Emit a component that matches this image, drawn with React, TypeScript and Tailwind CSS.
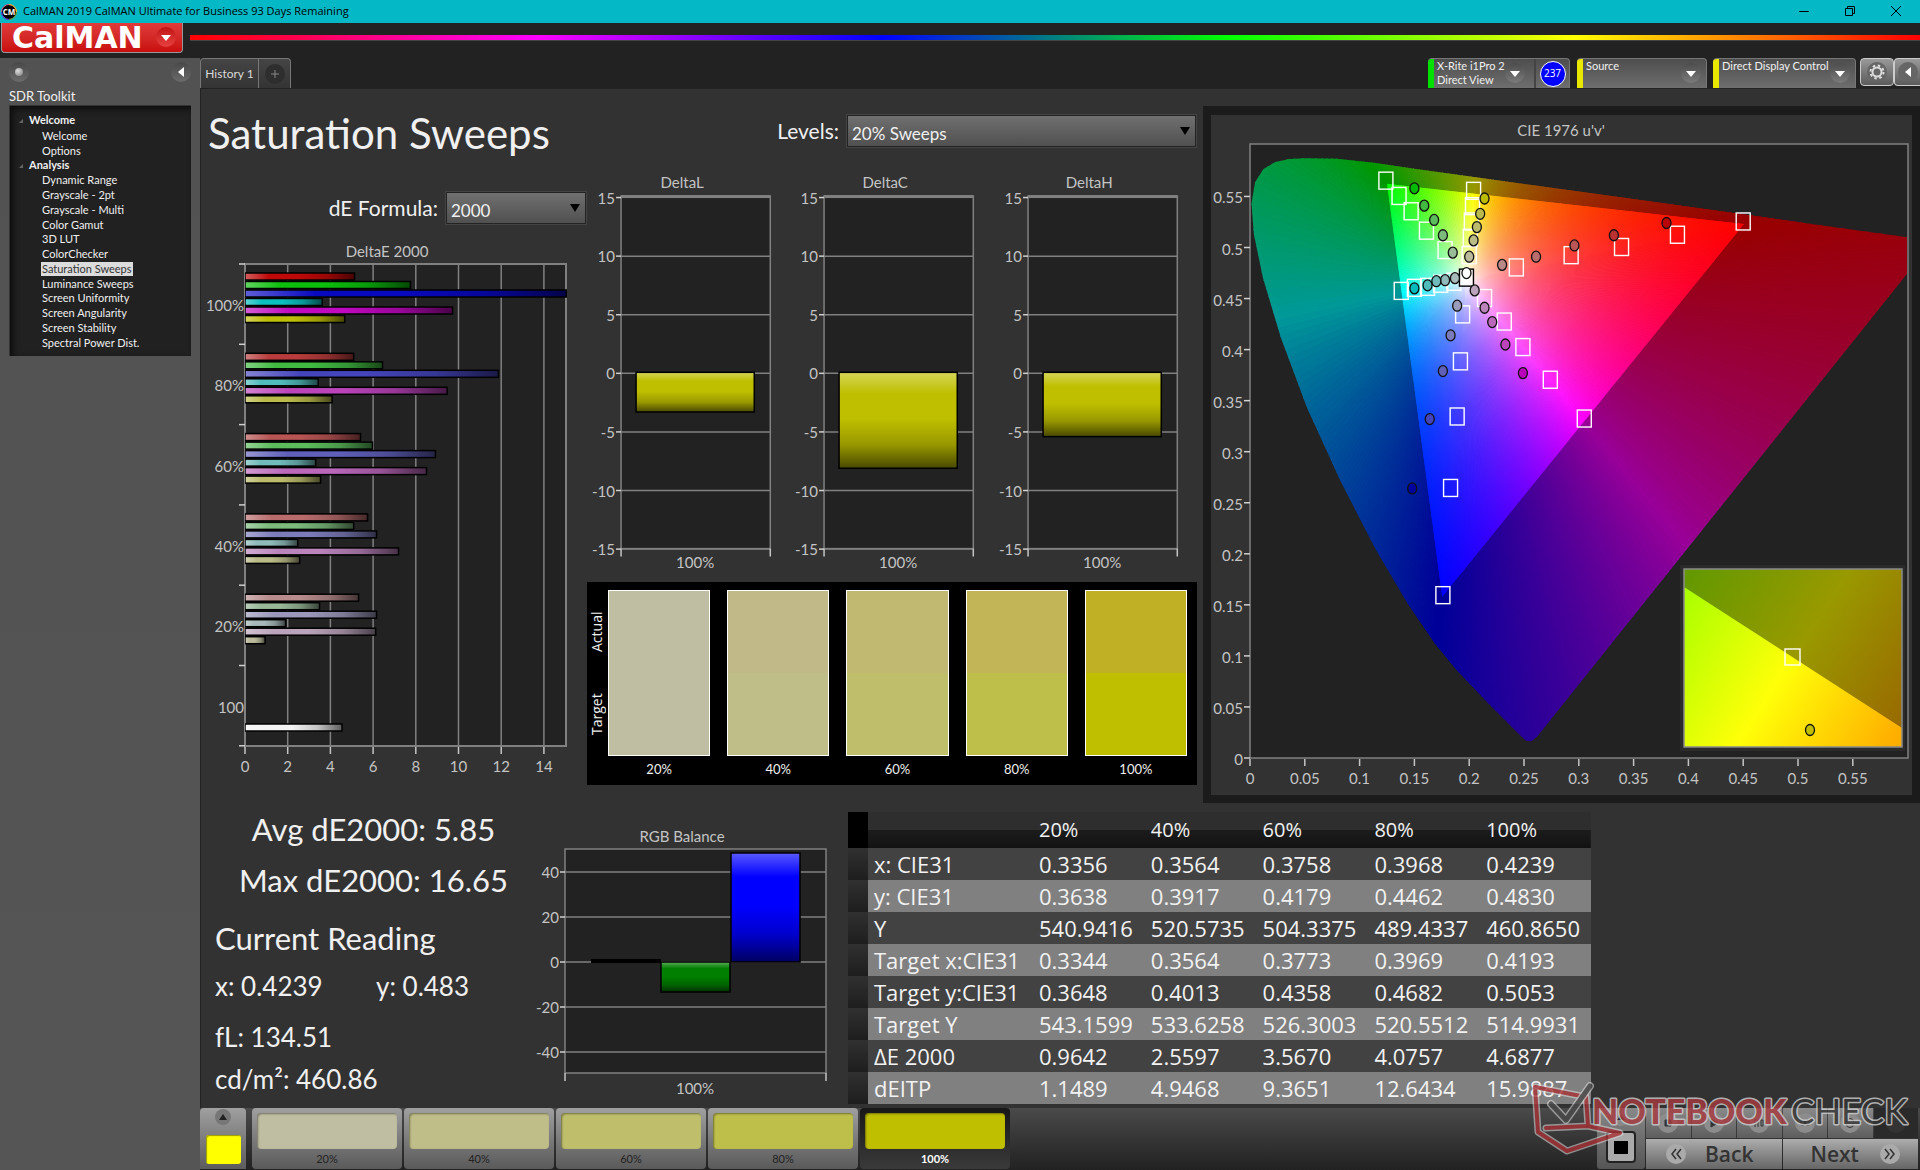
import React from "react";

/* ---------- data ---------- */

const NAV = [
  { title: "Welcome", items: ["Welcome", "Options"] },
  {
    title: "Analysis",
    items: [
      "Dynamic Range",
      "Grayscale - 2pt",
      "Grayscale - Multi",
      "Color Gamut",
      "3D LUT",
      "ColorChecker",
      "Saturation Sweeps",
      "Luminance Sweeps",
      "Screen Uniformity",
      "Screen Angularity",
      "Screen Stability",
      "Spectral Power Dist.",
    ],
  },
];

const DE_GROUPS = [
  { label: "100%", values: [5.13, 7.75, 15.05, 3.62, 9.72, 4.67], colors: ["#bf0808", "#0cbf0c", "#0808bf", "#0cbfbf", "#bf08bf", "#bfbf08"] },
  { label: "80%", values: [5.09, 6.44, 11.87, 3.43, 9.47, 4.08], colors: ["#b83c3c", "#40bb40", "#4444bb", "#50bbbb", "#bb44bb", "#bbbb4c"] },
  { label: "60%", values: [5.41, 5.97, 8.92, 3.31, 8.5, 3.54], colors: ["#b85454", "#5cbb5c", "#6060bb", "#70bbbb", "#bb68bb", "#bbbb6c"] },
  { label: "40%", values: [5.74, 5.09, 6.16, 2.47, 7.19, 2.56], colors: ["#b86c6c", "#7cbb7c", "#7c7cbb", "#90bbbb", "#bb84bb", "#bbbb88"] },
  { label: "20%", values: [5.32, 3.49, 6.16, 1.9, 6.12, 0.94], colors: ["#b88c8c", "#98b898", "#9c98bb", "#a8b8b8", "#bba4bb", "#bbbb9c"] },
];

const SWATCHES = [
  { label: "20%", actual: "#bfbda2", target: "#bfbea3" },
  { label: "40%", actual: "#c1b988", target: "#bfbe88" },
  { label: "60%", actual: "#c1b871", target: "#bebe6b" },
  { label: "80%", actual: "#c2b557", target: "#bebf4a" },
  { label: "100%", actual: "#bfb025", target: "#bfbf00" },
];

const COLUMNS = ["20%", "40%", "60%", "80%", "100%"];
const ROWS = [
  ["x: CIE31", "0.3356", "0.3564", "0.3758", "0.3968", "0.4239"],
  ["y: CIE31", "0.3638", "0.3917", "0.4179", "0.4462", "0.4830"],
  ["Y", "540.9416", "520.5735", "504.3375", "489.4337", "460.8650"],
  ["Target x:CIE31", "0.3344", "0.3564", "0.3773", "0.3969", "0.4193"],
  ["Target y:CIE31", "0.3648", "0.4013", "0.4358", "0.4682", "0.5053"],
  ["Target Y", "543.1599", "533.6258", "526.3003", "520.5512", "514.9931"],
  ["ΔE 2000", "0.9642", "2.5597", "3.5670", "4.0757", "4.6877"],
  ["dEITP", "1.1489", "4.9468", "9.3651", "12.6434", "15.9887"],
];

/* u'v' coordinates in thousandths */
const TARGETS = [
  [243, 480], [293, 492], [339, 500], [390, 512], [450, 525],
  [178, 497], [161, 516], [147, 535], [136, 550], [124, 565],
  [200, 492], [201, 509], [202, 525], [203, 540], [204, 555],
  [186, 466], [174, 464], [162, 461], [150, 460], [138, 457],
  [194, 434], [192, 388], [189, 334], [183, 264], [176, 159],
  [214, 450], [232, 427], [249, 402], [274, 370], [305, 332],
];
const READINGS: [number, number, string][] = [
  [230, 483, "#bb8888"], [261, 491, "#bb6c6c"], [296, 502, "#bb5454"], [332, 512, "#bb3030"], [380, 524, "#bb0000"],
  [185, 495, "#98bb98"], [176, 512, "#7cbb7c"], [168, 527, "#5cbb5c"], [159, 541, "#40bb40"], [150, 558, "#00bb00"],
  [200, 491, "#bbbb9c"], [204, 507, "#bbbb88"], [207, 520, "#bbbb6c"], [210, 533, "#bbbb4c"], [214, 548, "#bbbb00"],
  [187, 470, "#a8bbbb"], [178, 468, "#90bbbb"], [170, 467, "#70bbbb"], [162, 463, "#50bbbb"], [150, 460, "#00bbbb"],
  [189, 443, "#9c9cbb"], [183, 414, "#7c7cbb"], [176, 379, "#6060bb"], [164, 332, "#4444bb"], [148, 264, "#0000a0"],
  [205, 458, "#bba4bb"], [214, 441, "#bb84bb"], [221, 427, "#bb68bb"], [233, 405, "#bb44bb"], [249, 377, "#bb00bb"],
];
const LOCUS = [
  [0.2568, 0.0165], [0.252, 0.0168], [0.2461, 0.0228], [0.2347, 0.035], [0.216, 0.055], [0.1877, 0.0871], [0.169, 0.1119],
  [0.1441, 0.151], [0.1147, 0.2044], [0.0828, 0.2708], [0.0521, 0.3427], [0.0282, 0.4117], [0.0119, 0.4698],
  [0.0035, 0.5131], [0.0014, 0.5432], [0.0046, 0.5639], [0.0123, 0.577], [0.0231, 0.5837], [0.036, 0.5868],
  [0.0501, 0.5874], [0.0792, 0.587], [0.1127, 0.583], [0.1531, 0.5766], [0.2026, 0.5694], [0.2623, 0.5604],
  [0.3315, 0.5501], [0.4035, 0.5393], [0.5203, 0.5219], [0.6234, 0.5065], [0.262, 0.021],
];

/* ---------- gamut colouring ---------- */

type Pt = [number, number];
const PRIM: Pt[] = [[0.4507, 0.5229], [0.125, 0.5625], [0.1754, 0.1579]];
const WEIGHT = [3.66, 11.44, 4.11];
const WHITE: Pt = [0.1978, 0.4683];

function rgbAt([u, v]: Pt, gain: number) {
  const [[x1, y1], [x2, y2], [x3, y3]] = PRIM;
  const d = (y2 - y3) * (x1 - x3) + (x3 - x2) * (y1 - y3);
  const a = ((y2 - y3) * (u - x3) + (x3 - x2) * (v - y3)) / d;
  const b = ((y3 - y1) * (u - x3) + (x1 - x3) * (v - y3)) / d;
  const lin = [a, b, 1 - a - b].map((n, i) => Math.max(0, n) / WEIGHT[i]);
  const top = Math.max(...lin);
  return `rgb(${lin.map((n) => Math.round((n / top) * 255 * gain)).join(",")})`;
}

const PX = (u: number) => 39 + u * 1096;
const PY = (v: number) => 643 - v * 1021;
const mix = (a: Pt, b: Pt, t: number): Pt => [a[0] + (b[0] - a[0]) * t, a[1] + (b[1] - a[1]) * t];
const toPx = ([u, v]: Pt): Pt => [PX(u), PY(v)];
const join = (pts: Pt[]) => pts.map((p) => `${p[0].toFixed(2)},${p[1].toFixed(2)}`).join(" ");

const STEPS = 150;
const STOPS = [0, 0.08, 0.18, 0.3, 0.45, 0.65, 0.82, 1];
const WEDGES = [0, 1, 2].flatMap((edge) =>
  Array.from({ length: STEPS }, (_, i) => {
    const from = PRIM[edge];
    const to = PRIM[(edge + 1) % 3];
    const a = mix(from, to, i / STEPS);
    const b = mix(from, to, (i + 1) / STEPS);
    const mid = mix(a, b, 0.5);
    const [ax, ay] = toPx(from);
    const [bx, by] = toPx(to);
    const [wx, wy] = toPx(WHITE);
    const t = ((wx - ax) * (bx - ax) + (wy - ay) * (by - ay)) / ((bx - ax) ** 2 + (by - ay) ** 2);
    return {
      id: `ray-${edge}-${i}`,
      foot: [ax + (bx - ax) * t, ay + (by - ay) * t] as Pt,
      inner: join([WHITE, a, b].map((p) => toPx(p as Pt))),
      outer: join([toPx(WHITE), toPx(mix(WHITE, a, 8)), toPx(mix(WHITE, b, 8))]),
      dim: rgbAt(mid, 0.6),
      stops: STOPS.map((s) => ({ s, c: rgbAt(mix(WHITE, mid, s), 1) })),
    };
  }),
);

/* ---------- shared chart parts ---------- */

const GRID = "#808080";
const LABEL = "fill-[#c4c4c4] text-[15px]";

function Shading({ id, vertical }: { id: string; vertical?: boolean }) {
  return (
    <linearGradient id={id} x1="0" y1="0" x2={vertical ? "0" : "1"} y2={vertical ? "1" : "0"}>
      <stop offset="0" stopColor="#fff" stopOpacity="0.35" />
      <stop offset="0.22" stopColor="#fff" stopOpacity="0" />
      <stop offset="0.48" stopColor="#000" stopOpacity="0" />
      <stop offset="0.75" stopColor="#000" stopOpacity="0.2" />
      <stop offset="1" stopColor="#000" stopOpacity="0.62" />
    </linearGradient>
  );
}

function Bar({ x, y, w, h, color, shade }: { x: number; y: number; w: number; h: number; color: string; shade: string }) {
  return (
    <g>
      <rect x={x} y={y} width={w} height={h} fill={color} />
      <rect x={x} y={y} width={w} height={h} fill={`url(#${shade})`} stroke="#000" strokeWidth="1.5" />
    </g>
  );
}

function DeltaEChart() {
  const x0 = 45;
  const unit = 21.35;
  const top = 24;
  const step = 80.3;
  return (
    <svg viewBox="0 0 387 545" className="block w-full overflow-visible" role="img" aria-label="DeltaE 2000">
      <defs>
        <Shading id="shade-h" />
        <clipPath id="de-plot">
          <rect x={x0} y={top} width="322" height="482" />
        </clipPath>
      </defs>
      <text x="187" y="17" textAnchor="middle" className={LABEL}>DeltaE 2000</text>
      <rect x={x0} y={top} width="321" height="482" fill="#222" stroke={GRID} strokeWidth="2" />
      {[2, 4, 6, 8, 10, 12, 14].map((n) => (
        <line key={n} x1={x0 + n * unit} x2={x0 + n * unit} y1={top} y2="506" stroke={GRID} strokeWidth="1.5" />
      ))}
      {[0, 2, 4, 6, 8, 10, 12, 14].map((n) => (
        <g key={n}>
          <line x1={x0 + n * unit} x2={x0 + n * unit} y1="507" y2="514" stroke="#c4c4c4" strokeWidth="1.5" />
          <text x={x0 + n * unit} y="532" textAnchor="middle" className={LABEL}>{n}</text>
        </g>
      ))}
      {[0, 1, 2, 3, 4, 5, 6].map((n) => (
        <line key={n} x1="39" x2={x0} y1={top + n * step} y2={top + n * step} stroke="#d0d0d0" strokeWidth="1.5" />
      ))}
      <g clipPath="url(#de-plot)">
        {DE_GROUPS.map((g, gi) =>
          g.values.map((v, i) => (
            <Bar key={`${gi}-${i}`} x={x0} y={33 + gi * step + i * 8.5} w={v * unit} h={7} color={g.colors[i]} shade="shade-h" />
          )),
        )}
        <Bar x={x0} y={484} w={97} h={7} color="#f4f4f4" shade="shade-h" />
      </g>
      {[...DE_GROUPS.map((g) => g.label), "100"].map((l, i) => (
        <text key={i} x="44" y={71 + i * step} textAnchor="end" className={LABEL}>{l}</text>
      ))}
    </svg>
  );
}

function DeltaChart({ name, value }: { name: string; value: number }) {
  const y = (n: number) => 374 - 170 - n * 11.7;
  return (
    <svg viewBox="0 0 203 412" className="block w-full overflow-visible" role="img" aria-label={name}>
      <defs>
        <Shading id={`shade-${name}`} vertical />
      </defs>
      <text x="95" y="19" textAnchor="middle" className={LABEL}>{name}</text>
      <rect x="34" y="27" width="149" height="352" fill="#222" stroke={GRID} strokeWidth="1.5" />
      <rect x="34" y="26" width="149" height="3" fill={GRID} />
      {[15, 10, 5, 0, -5, -10, -15].map((n) => (
        <g key={n}>
          {n < 15 && <line x1="34" x2="183" y1={y(n)} y2={y(n)} stroke={GRID} strokeWidth="1.5" />}
          <line x1="29" x2="34" y1={y(n)} y2={y(n)} stroke="#d0d0d0" strokeWidth="1.5" />
          <text x="28" y={y(n) + 6} textAnchor="end" className={LABEL}>{n}</text>
        </g>
      ))}
      <path d="M34 379v8M183 379v8" stroke="#c4c4c4" strokeWidth="1.5" />
      <Bar x={49} y={y(0) - 1} w={118} h={-value * 11.7 + 1} color="#bfbf00" shade={`shade-${name}`} />
      <text x="108" y="398" textAnchor="middle" className={LABEL}>100%</text>
    </svg>
  );
}

function RgbBalance() {
  return (
    <svg viewBox="0 0 296 285" className="block w-full overflow-visible" role="img" aria-label="RGB Balance">
      <defs>
        <Shading id="shade-rgb" vertical />
      </defs>
      <text x="142" y="24" textAnchor="middle" className={LABEL}>RGB Balance</text>
      <rect x="25" y="31" width="261" height="224" fill="#222" stroke={GRID} strokeWidth="1.5" />
      {[40, 20, 0, -20, -40].map((n) => (
        <g key={n}>
          <line x1="25" x2="286" y1={144 - n * 2.25} y2={144 - n * 2.25} stroke={GRID} strokeWidth="1.5" />
          <line x1="20" x2="25" y1={144 - n * 2.25} y2={144 - n * 2.25} stroke="#d0d0d0" strokeWidth="1.5" />
          <text x="19" y={150 - n * 2.25} textAnchor="end" className={LABEL}>{n}</text>
        </g>
      ))}
      <path d="M25 255v8M286 255v8" stroke="#c4c4c4" strokeWidth="1.5" />
      <rect x="51" y="141" width="70" height="4" fill="#000" />
      <Bar x={121} y={144} w={69} h={30} color="#007f00" shade="shade-rgb" />
      <Bar x={191} y={35} w={69} h={109} color="#0000ff" shade="shade-rgb" />
      <text x="155" y="276" textAnchor="middle" className={LABEL}>100%</text>
    </svg>
  );
}

function CieChart() {
  const ticks = Array.from({ length: 12 }, (_, i) => i * 50);
  return (
    <svg viewBox="0 0 701 680" className="block w-full overflow-visible" role="img" aria-label="CIE 1976 u'v'">
      <defs>
        <clipPath id="cie-plot"><rect x="39" y="30" width="657" height="613" /></clipPath>
        <clipPath id="cie-locus"><polygon points={join(LOCUS.map((p) => toPx(p as Pt)))} /></clipPath>
        <clipPath id="cie-gamut"><polygon points={join(PRIM.map(toPx))} /></clipPath>
        {WEDGES.map((w) => (
          <linearGradient key={w.id} id={w.id} gradientUnits="userSpaceOnUse" x1={PX(WHITE[0])} y1={PY(WHITE[1])} x2={w.foot[0]} y2={w.foot[1]}>
            {w.stops.map((s) => <stop key={s.s} offset={s.s} stopColor={s.c} />)}
          </linearGradient>
        ))}
        <linearGradient id="inset-dim" gradientUnits="userSpaceOnUse" x1="473" y1="473" x2="691" y2="613">
          <stop offset="0" stopColor="#659900" />
          <stop offset="0.5" stopColor="#999900" />
          <stop offset="1" stopColor="#996900" />
        </linearGradient>
        <linearGradient id="inset-lit" gradientUnits="userSpaceOnUse" x1="473" y1="473" x2="691" y2="613">
          <stop offset="0" stopColor="#a8ff00" />
          <stop offset="0.5" stopColor="#ffff08" />
          <stop offset="1" stopColor="#ffae00" />
        </linearGradient>
      </defs>
      <text x="350" y="21" textAnchor="middle" className={LABEL}>CIE 1976 u'v'</text>
      <rect x="39" y="29" width="658" height="614" fill="#222" stroke={GRID} strokeWidth="1.5" />
      <g clipPath="url(#cie-plot)">
        <g clipPath="url(#cie-locus)">
          {WEDGES.map((w) => <polygon key={w.id} points={w.outer} fill={w.dim} stroke={w.dim} strokeWidth="1" />)}
        </g>
        <g clipPath="url(#cie-gamut)">
          {WEDGES.map((w) => <polygon key={w.id} points={w.inner} fill={`url(#${w.id})`} stroke={`url(#${w.id})`} strokeWidth="0.7" />)}
        </g>
      </g>
      {ticks.map((t) => (
        <g key={t}>
          <path d={`M${PX(t / 1000)} 644v7`} stroke="#c4c4c4" strokeWidth="1.5" />
          <text x={PX(t / 1000)} y="669" textAnchor="middle" className={LABEL}>{t / 1000}</text>
          <path d={`M33 ${PY(t / 1000)}h6`} stroke="#d0d0d0" strokeWidth="1.5" />
          <text x="32" y={PY(t / 1000) + 7} textAnchor="end" className={LABEL}>{t / 1000}</text>
        </g>
      ))}
      {TARGETS.map(([u, v], i) => (
        <rect key={i} x={PX(u / 1000) - 7} y={PY(v / 1000) - 9} width="14" height="17" fill="none" stroke="#fff" strokeWidth="1.4" />
      ))}
      <rect x={PX(0.1975) - 7} y={PY(0.47) - 9} width="14" height="17" fill="#fff" fillOpacity="0.7" stroke="#000" strokeWidth="1.4" />
      {READINGS.map(([u, v, c], i) => (
        <ellipse key={i} cx={PX(u / 1000)} cy={PY(v / 1000)} rx="4.5" ry="5.5" fill={c} stroke="#111" strokeWidth="1.3" />
      ))}
      <ellipse cx={PX(0.1975)} cy={PY(0.475)} rx="4.5" ry="5.5" fill="#fff" stroke="#111" strokeWidth="1.3" />
      <rect x="469" y="450" width="225" height="186" fill="#2b2b2b" />
      <rect x="473" y="454" width="218" height="178" fill="url(#inset-dim)" />
      <polygon points="473,472 691,613 691,632 473,632" fill="url(#inset-lit)" />
      <rect x="473" y="454" width="218" height="178" fill="none" stroke="#8a8a8a" strokeWidth="1.5" />
      <rect x="574" y="534" width="15" height="16" fill="none" stroke="#fff" strokeWidth="1.4" />
      <ellipse cx="599" cy="615" rx="4.5" ry="5.5" fill="#bfbf00" stroke="#111" strokeWidth="1.3" />
    </svg>
  );
}

/* ---------- controls ---------- */

function DownDot() {
  return (
    <span className="flex h-5 w-5 items-center justify-center rounded-full bg-gradient-to-b from-[#4c4c4c] to-[#7c7c7c]">
      <svg viewBox="0 0 10 6" className="mt-[2px] h-[6px] w-[10px]"><path d="M0 0h10L5 6z" fill="#fff" /></svg>
    </span>
  );
}

function Choice({ id, value, options, className }: { id: string; value: string; options: string[]; className: string }) {
  return (
    <span className={`relative block h-8 shrink-0 ${className}`}>
      <select
        id={id}
        defaultValue={value}
        className="h-full w-full appearance-none border border-[#232323] bg-gradient-to-b from-[#707070] to-[#505050] pt-[6px] pl-1 text-[17px] leading-6 text-[#f0f0f0] outline-1 outline-[#444]"
      >
        {options.map((o) => <option key={o}>{o}</option>)}
      </select>
      <svg viewBox="0 0 10 8" className="pointer-events-none absolute top-3 right-[6px] h-2 w-[10px]"><path d="M0 0h10L5 8z" fill="#000" /></svg>
    </span>
  );
}

function Device({ lines, bar, className, count }: { lines: string[]; bar: string; className: string; count?: string }) {
  return (
    <div className={`flex h-[30px] overflow-hidden rounded-t-[4px] border-t border-r border-[#777] bg-gradient-to-b from-[#4e4e4e] to-[#6e6e6e] ${className}`}>
      <span className={`w-[6px] shrink-0 ${bar}`} />
      <button className={`flex min-w-0 flex-1 items-start justify-between pl-[3px] text-left text-[11px] leading-[14px] text-[#f0f0f0] ${count ? "pr-[10px]" : "pr-[5px]"}`}>
        <span className="whitespace-nowrap">{lines.map((l) => <span key={l} className="block">{l}</span>)}</span>
        <span className="mt-1 shrink-0"><DownDot /></span>
      </button>
      {count && (
        <span className="flex w-[35px] shrink-0 items-center justify-center border-l-2 border-[#444]">
          <span className="flex h-[26px] w-[26px] items-center justify-center rounded-full border border-white bg-[#0000ff] font-['Open_Sans',sans-serif] text-[10px] text-white">{count}</span>
        </span>
      )}
    </div>
  );
}

function Header() {
  return (
    <header>
      <div className="flex h-[23px] items-center bg-[#04b8c6] pr-[18px] pl-px font-['Open_Sans',sans-serif] text-[11px] text-black">
        <svg viewBox="0 0 16 16" className="h-4 w-4">
          <circle cx="8" cy="8" r="7.5" fill="#000" stroke="#d58" strokeWidth="1" />
          <path d="M8 .5A7.500 7.500 0 0 1 15.500 8" fill="none" stroke="#e8d020" />
          <path d="M15.500 8A7.500 7.500 0 0 1 8 15.500" fill="none" stroke="#30c040" />
          <path d="M8 15.500A7.500 7.500 0 0 1 .5 8" fill="none" stroke="#3040e0" />
          <text x="8" y="11" textAnchor="middle" className="fill-white text-[8px] font-bold">CM</text>
        </svg>
        <span className="ml-[6px] flex-1">CalMAN 2019 CalMAN Ultimate for Business 93 Days Remaining</span>
        <div className="-mt-[2px] flex gap-[34px]">
          <button aria-label="Minimize"><svg viewBox="0 0 12 12" className="h-3 w-3"><path d="M1 6.500h10" stroke="#000" /></svg></button>
          <button aria-label="Restore"><svg viewBox="0 0 12 12" className="h-3 w-3" fill="none" stroke="#000"><path d="M1.500 3.500h7v7h-7zM3.500 3.500v-2h7v7h-2" /></svg></button>
          <button aria-label="Close"><svg viewBox="0 0 12 12" className="h-3 w-3"><path d="M1 1l10 10M11 1L1 11" stroke="#000" /></svg></button>
        </div>
      </div>
      <div className="flex h-[35px] items-start bg-[#222]">
        <button className="ml-px flex h-[30px] w-[182px] items-center justify-between rounded-b-[4px] border border-t-0 border-[#999] bg-gradient-to-b from-[#e03a3a] to-[#c80c0c] pr-[6px] pl-[10px] font-['DejaVu_Sans',sans-serif] text-[30px] leading-[30px] font-bold text-white">
          <span className="h-[30px]">CalMAN</span>
          <span className="-mt-px flex h-5 w-5 items-center justify-center rounded-full bg-gradient-to-b from-[#c01010] to-[#e84040]">
            <svg viewBox="0 0 10 6" className="mt-[2px] h-[6px] w-[10px]"><path d="M0 0h10L5 6z" fill="#fff" /></svg>
          </span>
        </button>
        <div className="mt-3 ml-[7px] h-[6px] flex-1 border-b border-[#444] bg-[linear-gradient(to_right,#f00,#f0f_20%,#00f_40%,#0f0_60%,#ff0_80%,#f00)]" />
      </div>
    </header>
  );
}

function Sidebar() {
  return (
    <nav className="w-[200px] shrink-0 bg-gradient-to-b from-[#525252] to-[#555] pr-[9px] pl-[9px] text-[#f0f0f0]">
      <div className="flex h-7 items-center justify-between">
        <span className="flex h-5 w-5 items-center justify-center rounded-full bg-gradient-to-b from-[#484848] to-[#6c6c6c]">
          <span className="h-2 w-2 rounded-full bg-[radial-gradient(circle_at_35%_35%,#ddd,#777)]" />
        </span>
        <button aria-label="Collapse" className="flex h-5 w-5 items-center justify-center rounded-full bg-gradient-to-b from-[#484848] to-[#6c6c6c]">
          <svg viewBox="0 0 6 10" className="h-[10px] w-[6px]"><path d="M6 0v10L0 5z" fill="#fff" /></svg>
        </button>
      </div>
      <div className="h-[19px] text-[13px] leading-5">SDR Toolkit</div>
      <div className="flex h-[251px] flex-col border-t border-l border-[#333] bg-[#212121] pt-[7px] pl-[9px] text-[11px] shadow-[inset_3px_3px_6px_#0d0d0d]">
        {NAV.map((g) => (
          <section key={g.title} className="flex flex-col">
            <h2 className="flex h-[15px] items-center gap-[6px] font-bold">
              <svg viewBox="0 0 4 4" className="h-1 w-1"><path d="M4 0v4H0z" fill="#666" /></svg>
              {g.title}
            </h2>
            <ul className={`grid auto-rows-fr pl-[23px] ${g.items.length > 2 ? "h-[177px]" : "h-[30px]"}`}>
              {g.items.map((it) => (
                <li key={it} className="flex items-center">
                  <a href="#" className={it === "Saturation Sweeps" ? "-ml-px bg-[#dcdcdc] px-px leading-[14px] text-[#333]" : "leading-[14px]"}>{it}</a>
                </li>
              ))}
            </ul>
          </section>
        ))}
      </div>
    </nav>
  );
}

function TopBar() {
  return (
    <div className="flex h-[31px] items-start bg-[#222]">
      <div className="flex h-[30px] rounded-t-[4px] border border-b-0 border-[#777] bg-gradient-to-b from-[#454545] to-[#343434] text-[#d8d8d8]">
        <button className="w-[58px] border-r border-[#777] text-[12px] whitespace-nowrap">History 1</button>
        <button aria-label="Add history" className="flex w-[31px] items-center justify-center">
          <span className="flex h-5 w-5 items-center justify-center rounded-full bg-[#2e2e2e]">
            <svg viewBox="0 0 8 8" className="h-2 w-2"><path d="M4 0v8M0 4h8" stroke="#888" /></svg>
          </span>
        </button>
      </div>
      <div className="ml-auto flex items-start">
        <Device lines={["X-Rite i1Pro 2", "Direct View"]} bar="bg-[#00e000]" className="w-[142px]" count="237" />
        <Device lines={["Source"]} bar="bg-[#e8e800]" className="ml-[7px] w-[130px]" />
        <Device lines={["Direct Display Control"]} bar="bg-[#e8e800]" className="ml-[6px] w-[143px]" />
        <button aria-label="Settings" className="ml-1 flex h-7 w-[34px] items-center justify-center rounded-[4px] border border-[#ccc] bg-gradient-to-b from-[#999] to-[#5c5c5c]">
          <svg viewBox="0 0 20 20" className="h-5 w-5">
            <circle cx="10" cy="10" r="10" fill="#666" />
            <circle cx="10" cy="10" r="4.500" fill="none" stroke="#ddd" strokeWidth="2" />
            <circle cx="10" cy="10" r="6.500" fill="none" stroke="#ddd" strokeWidth="2" strokeDasharray="2.500 2.600" />
          </svg>
        </button>
        <button aria-label="Show panel" className="flex h-7 w-[26px] items-center justify-center rounded-l-[4px] border border-r-0 border-[#ccc] bg-gradient-to-b from-[#999] to-[#5c5c5c]">
          <span className="flex h-5 w-5 items-center justify-center rounded-full bg-[#666]">
            <svg viewBox="0 0 6 10" className="h-[10px] w-[6px]"><path d="M6 0v10L0 5z" fill="#fff" /></svg>
          </span>
        </button>
      </div>
    </div>
  );
}

function Comparison() {
  return (
    <div className="flex h-[203px] bg-black pt-2 pr-[10px] text-[#f0f0f0]">
      <div className="flex h-[166px] w-[21px] flex-col-reverse font-['Open_Sans',sans-serif] text-[14px]">
        <span className="flex-1 rotate-180 text-center leading-5 [writing-mode:vertical-rl]">Target</span>
        <span className="flex-1 rotate-180 text-center leading-5 [writing-mode:vertical-rl]">Actual</span>
      </div>
      <div className="grid flex-1 grid-cols-5 gap-[17px]">
        {SWATCHES.map((s) => (
          <figure key={s.label}>
            <div className="h-[166px] border border-white">
              <div className="h-1/2" style={{ background: s.actual }} />
              <div className="h-1/2" style={{ background: s.target }} />
            </div>
            <figcaption className="text-center text-[13px] leading-[26px]">{s.label}</figcaption>
          </figure>
        ))}
      </div>
    </div>
  );
}

function DataTable() {
  return (
    <table className="w-full table-fixed border-collapse text-left font-['Open_Sans',sans-serif] text-[22px] text-[#f2f2f2]">
      <colgroup>
        <col className="w-5" />
        <col className="w-[164px]" />
        <col /><col /><col /><col /><col />
      </colgroup>
      <thead>
        <tr className="h-9 bg-[linear-gradient(to_bottom,#2e2e2e_50%,#1c1c1c_50%,#121212)] text-[20px]">
          <td className="bg-black p-0" />
          <td className="p-0" />
          {COLUMNS.map((c) => <th key={c} scope="col" className="p-0 pl-[7px] leading-9 font-normal">{c}</th>)}
        </tr>
      </thead>
      <tbody>
        {ROWS.map((r, i) => (
          <tr key={r[0]} className={i % 2 ? "h-8 bg-[#808080]" : "h-8 bg-[#424242]"}>
            <td className="bg-gradient-to-b from-[#303030] to-[#1e1e1e] p-0" />
            <th scope="row" className="p-0 pl-[6px] leading-8 font-normal whitespace-nowrap">{r[0]}</th>
            {r.slice(1).map((c, j) => <td key={j} className="p-0 pl-[7px] leading-8">{c}</td>)}
          </tr>
        ))}
      </tbody>
    </table>
  );
}

function Watermark() {
  return (
    <svg viewBox="0 0 380 76" className="pointer-events-none absolute right-2 bottom-3 h-[76px] w-[380px] opacity-80" role="img" aria-label="NotebookCheck">
      <g fill="none" strokeLinejoin="round" strokeLinecap="round">
        <path d="M3 5L54 15L56 44L14 46M3 5L6 50L35 69L88 51L56 44" stroke="#ddd" strokeWidth="7" opacity=".7" />
        <path d="M3 5L54 15L56 44L14 46M3 5L6 50L35 69L88 51L56 44" stroke="#a83236" strokeWidth="4" />
        <path d="M19 22L34 38L58 4" stroke="#ddd" strokeWidth="8" opacity=".7" />
        <path d="M19 22L34 38L58 4" stroke="#4a4a4a" strokeWidth="5" />
      </g>
      <g className="font-['Lato',sans-serif] text-[34px]" stroke="#cfcfcf" strokeWidth="3" paintOrder="stroke" strokeLinejoin="round">
        <text x="60" y="42" fill="#a83a3e" className="font-black">NOTEBOOK</text>
        <text x="259" y="42" fill="#333" className="text-[35px]">CHECK</text>
      </g>
    </svg>
  );
}

const TRANSPORT = [
  { name: "Stop", d: "M3 3h6v6H3z" },
  { name: "Play", d: "M3 2l7 4-7 4z" },
  { name: "Step", d: "M2 2v8M5 2v8M8 3h2v6H8z" },
  { name: "Continuous", d: "M1.500 6a2.200 2.200 0 1 1 4.500 0a2.200 2.200 0 1 0 4.500 0a2.200 2.200 0 1 0-4.500 0a2.200 2.200 0 1 1-4.500 0" },
  { name: "Refresh", d: "M2.500 5a3.500 3.500 0 0 1 7 0M9.500 7a3.500 3.500 0 0 1-7 0" },
];

function Footer() {
  return (
    <footer className="flex h-[62px] items-start bg-gradient-to-b from-[#4a4a4a] to-[#222]">
      <button aria-label="Expand" className="flex h-[61px] w-[46px] flex-col items-center justify-between rounded-t-[4px] bg-gradient-to-b from-[#a0a0a0] to-[#5c5c5c] pt-px pb-[5px]">
        <span className="flex h-4 w-4 items-center justify-center rounded-full bg-[#777]">
          <svg viewBox="0 0 8 6" className="h-[6px] w-2"><path d="M0 6h8L4 0z" fill="#222" /></svg>
        </span>
        <span className="h-[29px] w-[35px] rounded-[3px] bg-[#ffff00] shadow-[inset_1px_1px_1px_#999900]" />
      </button>
      <div className="ml-[6px] flex gap-[2px]">
        {SWATCHES.map((s, i) => (
          <button
            key={s.label}
            className={
              i === 4
                ? "h-[61px] w-[150px] rounded-[4px] bg-gradient-to-b from-[#181818] to-[#3a3a3a] px-[5px] pt-[5px] text-[11px] font-bold text-white"
                : "h-[61px] w-[150px] rounded-[4px] bg-gradient-to-b from-[#a0a0a0] to-[#5a5a5a] px-[5px] pt-[5px] text-[11px] text-[#222]"
            }
          >
            <span className="block h-9 rounded-[4px] shadow-[inset_1px_1px_2px_#00000066]" style={{ background: s.target }} />
            <span className="block leading-5">{s.label}</span>
          </button>
        ))}
      </div>
      <div className="ml-auto flex h-[61px] gap-px pr-[2px]">
        <button aria-label="Stop pattern" className="flex w-12 flex-col items-center justify-between rounded-[3px] bg-gradient-to-b from-[#888] to-[#555] pt-[2px] pb-[6px]">
          <svg viewBox="0 0 16 16" className="h-4 w-4"><circle cx="8" cy="8" r="8" fill="#888" /><path d="M4 10h8L8 5z" fill="#222" /></svg>
          <span className="flex h-8 w-[30px] items-center justify-center rounded-[4px] border-2 border-[#222] bg-[#aaa]">
            <span className="h-[13px] w-[14px] bg-black" />
          </span>
        </button>
        <div className="grid w-[272px] grid-cols-2 grid-rows-[30px_31px] gap-x-px">
          <div className="col-span-2 grid grid-cols-6 gap-px">
            {TRANSPORT.map((t) => (
              <button key={t.name} aria-label={t.name} className="flex items-center justify-center bg-gradient-to-b from-[#8a8a8a] to-[#5e5e5e]">
                <span className="flex h-5 w-5 items-center justify-center rounded-full bg-[#8c8c8c]">
                  <svg viewBox="0 0 12 12" className="h-3 w-3" fill={t.name === "Stop" || t.name === "Play" ? "#333" : "none"} stroke="#333"><path d={t.d} /></svg>
                </span>
              </button>
            ))}
            <span className="flex items-center justify-center bg-[#2a2a2a]"><span className="h-5 w-5 rounded-full bg-[#333]" /></span>
          </div>
          <button className="flex items-center justify-between border-t border-[#333] bg-gradient-to-b from-[#adadad] to-[#666] pr-7 pl-5 font-['Open_Sans',sans-serif] text-[21px] font-semibold text-[#333]">
            <span className="flex h-5 w-5 items-center justify-center rounded-full bg-[#aaa]">
              <svg viewBox="0 0 12 12" className="h-3 w-3" fill="none" stroke="#333" strokeWidth="1.500"><path d="M6 1L2 6l4 5M11 1L7 6l4 5" /></svg>
            </span>
            <span className="leading-7">Back</span>
          </button>
          <button className="flex items-center justify-between border-t border-[#333] bg-gradient-to-b from-[#adadad] to-[#666] pr-[18px] pl-7 font-['Open_Sans',sans-serif] text-[21px] font-semibold text-[#333]">
            <span className="leading-7">Next</span>
            <span className="flex h-5 w-5 items-center justify-center rounded-full bg-[#aaa]">
              <svg viewBox="0 0 12 12" className="h-3 w-3" fill="none" stroke="#333" strokeWidth="1.500"><path d="M1 1l4 5-4 5M6 1l4 5-4 5" /></svg>
            </span>
          </button>
        </div>
      </div>
    </footer>
  );
}

export default function App() {
  return (
    <div className="relative flex min-h-screen min-w-[1400px] flex-col bg-[#222] font-['Lato',sans-serif]">
      <Header />
      <div className="flex flex-1">
        <Sidebar />
        <div className="flex min-w-0 flex-1 flex-col">
          <TopBar />
          <main className="flex-1 bg-[#323232] text-[#f0f0f0] shadow-[inset_1px_0_0_#232323]">
            <div className="grid grid-cols-[minmax(0,1003fr)_minmax(0,717fr)]">
              <div className="grid grid-cols-[minmax(0,387fr)_minmax(0,610fr)] pr-[6px]">
                <section>
                  <h1 className="pt-[14px] pl-2 text-[42px] leading-[60px] whitespace-nowrap">Saturation Sweeps</h1>
                  <div className="mt-7 flex h-[33px] items-center justify-end gap-2 pr-px">
                    <label htmlFor="formula" className="text-[21px] leading-8 whitespace-nowrap">dE Formula:</label>
                    <Choice id="formula" value="2000" options={["2000", "1994", "1976"]} className="w-[140px]" />
                  </div>
                  <div className="mt-4"><DeltaEChart /></div>
                </section>
                <section>
                  <div className="mt-[26px] flex h-8 items-center justify-end gap-2 pr-px">
                    <label htmlFor="levels" className="text-[21px] leading-8">Levels:</label>
                    <Choice id="levels" value="20% Sweeps" options={["20% Sweeps", "25% Sweeps"]} className="w-[349px]" />
                  </div>
                  <div className="mt-[22px] grid grid-cols-3">
                    <DeltaChart name="DeltaL" value={-3.3} />
                    <DeltaChart name="DeltaC" value={-8.1} />
                    <DeltaChart name="DeltaH" value={-5.4} />
                  </div>
                  <Comparison />
                </section>
              </div>
              <section className="mt-[17px] self-start border-8 border-t-9 border-[#1b1b1b]">
                <CieChart />
              </section>
            </div>
            <div className="grid grid-cols-[340fr_296fr_12fr_743fr_329fr]">
              <section className="pt-px pl-[15px] text-[26px]">
                <div className="-ml-2 text-center text-[31px]">
                  <p className="leading-[51px]">Avg dE2000: 5.85</p>
                  <p className="leading-[51px]">Max dE2000: 16.65</p>
                </div>
                <h2 className="mt-1 text-[31px] leading-[56px]">Current Reading</h2>
                <p className="flex leading-10"><span className="w-[161px]">x: 0.4239</span><span>y: 0.483</span></p>
                <p className="mt-[10px] leading-[42px]">fL: 134.51</p>
                <p className="leading-[42px]">cd/m²: 460.86</p>
              </section>
              <section className="pt-[15px]"><RgbBalance /></section>
              <span />
              <section className="pt-[9px]"><DataTable /></section>
            </div>
          </main>
          <Footer />
        </div>
      </div>
      <Watermark />
    </div>
  );
}
